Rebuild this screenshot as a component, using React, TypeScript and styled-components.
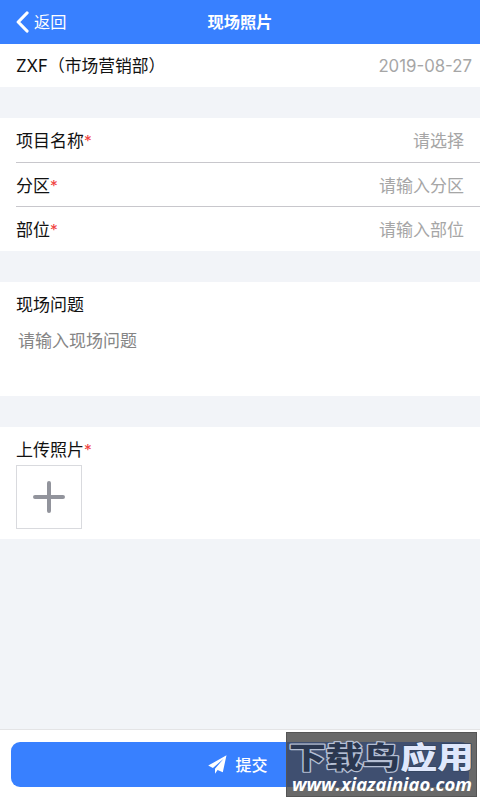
import React from 'react';
import styled, { createGlobalStyle } from 'styled-components';

const GlobalStyle = createGlobalStyle`
  * { box-sizing: border-box; }
  body { margin: 0; background: #f2f4f8; }
`;

const Screen = styled.div`
  position: relative;
  display: flex;
  flex-direction: column;
  width: 480px;
  height: 800px;
  overflow: hidden;
  background: #f2f4f8;
  color: #111;
  font-family: Inter, 'Noto Sans CJK SC', sans-serif;
  font-size: 17px;
  line-height: 24px;
`;

const Header = styled.header`
  display: grid;
  grid-template-columns: 1fr auto 1fr;
  align-items: center;
  height: 44px;
  flex: none;
  padding: 0 16px;
  background: #3880ff;
  color: #fff;
`;

const Back = styled.div`
  display: flex;
  align-items: center;
  gap: 5px;
  font-size: 16.2px;
`;

const Title = styled.h1`
  margin: 0;
  font-size: 16.3px;
  font-weight: 700;
`;

const Section = styled.section<{ $height: number; $gap?: number }>`
  flex: none;
  height: ${(p) => p.$height}px;
  margin-bottom: ${(p) => p.$gap ?? 31}px;
  padding-left: 16px;
  background: #fff;
`;

const Row = styled.div<{ $height: number; $right?: number; $top?: number; $line?: boolean }>`
  display: flex;
  align-items: center;
  justify-content: space-between;
  height: ${(p) => p.$height}px;
  padding-top: ${(p) => p.$top ?? 2}px;
  padding-right: ${(p) => p.$right ?? 16}px;
  border-bottom: ${(p) => (p.$line ? '1px solid #c8c7cc' : 'none')};
`;

const Label = styled.div`
  white-space: nowrap;
`;

const Department = styled.span`
  font-size: 16.8px;
`;

const Required = styled.span`
  color: #f04141;
  font-size: 15.5px;
  line-height: 1;
`;

const Hint = styled.div<{ $color?: string }>`
  color: ${(p) => p.$color ?? '#a6a6a6'};
`;

const DateText = styled(Hint)`
  font-size: 16.8px;
`;

const Block = styled.div<{ $top: number; $left?: number }>`
  padding: ${(p) => p.$top}px 0 0 ${(p) => p.$left ?? 0}px;
`;

const AddPhoto = styled.div`
  display: flex;
  align-items: center;
  justify-content: center;
  width: 66px;
  height: 64px;
  margin-top: 3px;
  border: 1px solid #d9dade;
`;

const Footer = styled.footer`
  flex: none;
  height: 71px;
  margin-top: auto;
  padding: 12px 11px 0;
  border-top: 1px solid #e4e4e6;
  background: #fff;
`;

const Submit = styled.div`
  display: flex;
  align-items: center;
  justify-content: center;
  gap: 8px;
  height: 45px;
  padding-right: 4px;
  border-radius: 9px;
  background: #3880ff;
  color: #fff;
  font-size: 16px;
  font-weight: 500;
`;

const Watermark = styled.div`
  position: absolute;
  left: 286px;
  top: 732px;
  width: 191px;
  height: 65px;
  border: 1px solid #555;
  background: #696969;

  svg { display: block; }
`;

const Star = () => <Required>*</Required>;

export default function App() {
  return (
    <Screen>
      <GlobalStyle />
      <Header>
        <Back>
          <svg width="13" height="22" viewBox="0 0 13 22" fill="none">
            <path d="M11 2 2.2 11 11 20" stroke="#fff" strokeWidth="3.2" strokeLinecap="round" strokeLinejoin="round" />
          </svg>
          <span>返回</span>
        </Back>
        <Title>现场照片</Title>
      </Header>

      <Section $height={43}>
        <Row $height={43} $right={8} $top={0}>
          <Department>ZXF（市场营销部）</Department>
          <DateText>2019-08-27</DateText>
        </Row>
      </Section>

      <Section $height={133}>
        <Row $height={45} $line>
          <Label>项目名称<Star /></Label>
          <Hint>请选择</Hint>
        </Row>
        <Row $height={44} $line>
          <Label>分区<Star /></Label>
          <Hint>请输入分区</Hint>
        </Row>
        <Row $height={44}>
          <Label>部位<Star /></Label>
          <Hint>请输入部位</Hint>
        </Row>
      </Section>

      <Section $height={114}>
        <Block $top={11}><Label>现场问题</Label></Block>
        <Block $top={12} $left={2}><Hint $color="#858585">请输入现场问题</Hint></Block>
      </Section>

      <Section $height={112} $gap={0}>
        <Block $top={11}>
          <Label>上传照片<Star /></Label>
          <AddPhoto>
            <svg width="32" height="32" viewBox="0 0 32 32">
              <path d="M16 2v28M2 16h28" stroke="#92949c" strokeWidth="4" strokeLinecap="round" />
            </svg>
          </AddPhoto>
        </Block>
      </Section>

      <Footer>
        <Submit>
          <svg width="19" height="19" viewBox="0 0 19 19" fill="#fff">
            <path d="M18.5 0.3 0.2 10.6 4.9 12.9 15.6 3.8 7 13.7 7 18.7 9.6 15 14.8 17.2Z" />
          </svg>
          <span>提交</span>
        </Submit>
      </Footer>

      <Watermark>
        <svg width="189" height="63" viewBox="0 0 189 63">
          <path d="M0 9H173Q182 9 182 18V45Q182 54 173 54H0Z" fill="#3f4f70" />
          <g
            fontFamily="'Noto Sans CJK SC', sans-serif"
            fontWeight="900"
            fontSize="29.5"
            strokeLinejoin="round"
            paintOrder="stroke"
            transform="translate(2 0) scale(1.25 1)"
          >
            <text x="0" y="35.5" fill="#2a3750" stroke="#b4bed3" strokeWidth="2.4">下载鸟</text>
            <text x="89" y="35.5" fill="#dfe7fb" stroke="#35445f" strokeWidth="1.4">应用</text>
          </g>
          <text
            x="5"
            y="58"
            textLength="180"
            lengthAdjust="spacingAndGlyphs"
            fontFamily="'Open Sans', sans-serif"
            fontWeight="700"
            fontStyle="italic"
            fontSize="18.5"
            fill="#fff"
          >
            www.xiazainiao.com
          </text>
        </svg>
      </Watermark>
    </Screen>
  );
}
